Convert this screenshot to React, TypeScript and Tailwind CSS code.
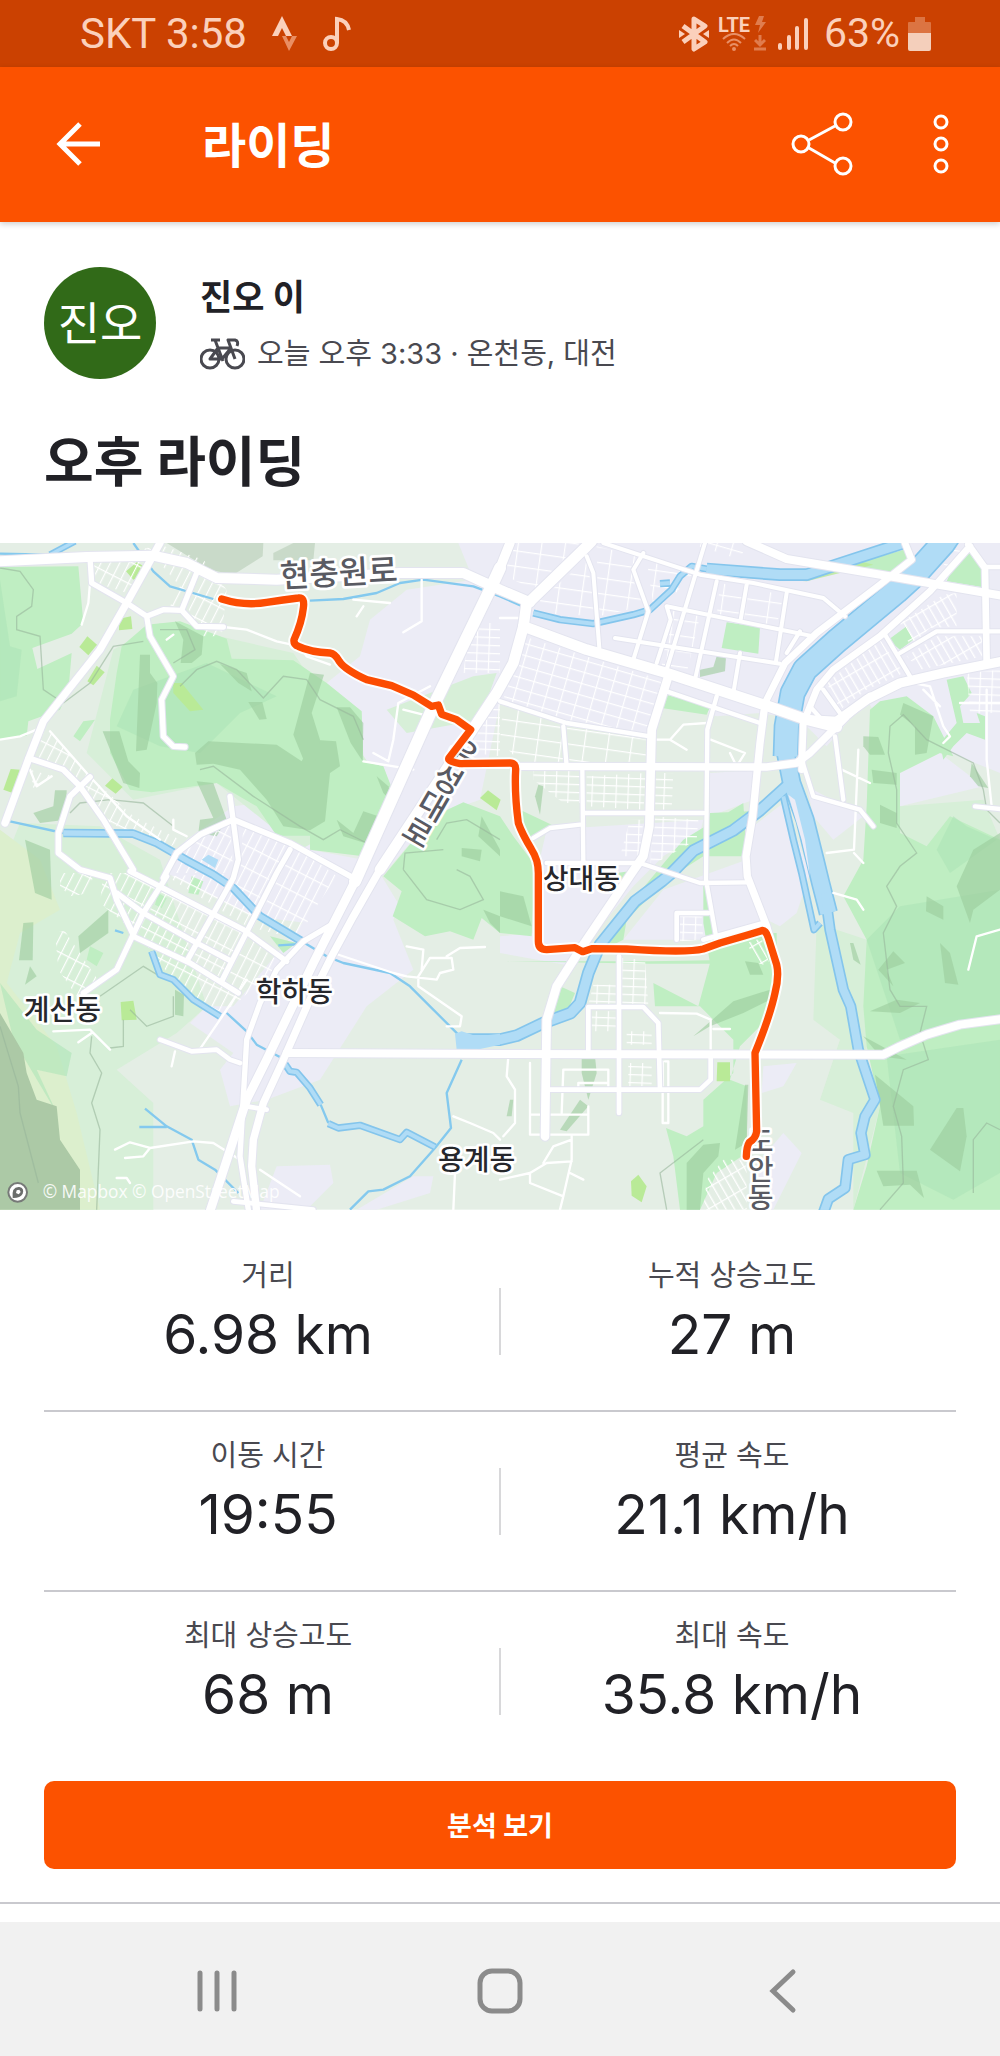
const stats = [
  [
    { label: '거리', value: '6.98 km' },
    { label: '누적 상승고도', value: '27 m' },
  ],
  [
    { label: '이동 시간', value: '19:55' },
    { label: '평균 속도', value: '21.1 km/h' },
  ],
  [
    { label: '최대 상승고도', value: '68 m' },
    { label: '최대 속도', value: '35.8 km/h' },
  ],
]

const route =
  'M665,178 Q735,200 800,188 Q850,180 895,175 Q915,172 910,205 Q905,250 882,300 Q880,315 895,320 Q930,337 990,340 Q1005,342 1018,365 Q1035,390 1100,420 L1175,438 1240,466 1295,500 1315,496 1325,524 1370,540 1412,570 1347,655 Q1342,665 1380,672 L1530,670 Q1548,670 1547,690 Q1543,760 1555,850 Q1565,880 1595,930 Q1615,960 1615,1000 L1615,1205 Q1615,1230 1640,1230 L1725,1224 1748,1236 1775,1227 1880,1228 Q2060,1240 2110,1228 L2160,1210 2240,1187 2285,1173 Q2297,1170 2305,1195 L2330,1275 Q2338,1310 2325,1360 Q2310,1430 2265,1540 L2270,1775 Q2268,1795 2248,1808 Q2240,1820 2239,1850'

const mainRoads = [
  { width: 30, d: 'M0,65 L260,52 460,48 560,70 650,115 830,120 1200,100 1390,100 1500,150 1590,188' },
  { width: 32, d: 'M1580,195 L1760,20 1775,5 M1580,190 L1570,262 1540,370 1490,460 1140,990' },
  { width: 22, d: 'M1140,990 L1060,1130 995,1250 925,1390 850,1560 790,1690 760,1800 755,1880 770,2015' },
  { width: 36, d: 'M1500,85 L1470,150 1300,500 1065,1025' },
  { width: 26, d: 'M1065,1025 L940,1270 800,1560 740,1680 630,2015' },
  { width: 32, d: 'M1570,260 L1760,330 2000,400 2300,498 2420,540 2510,562' },
  { width: 28, d: 'M2420,540 L2510,545 2600,480 2700,430 2830,400 3005,365 M1500,85 L1530,10' },
  { width: 24, d: 'M2240,5 L2360,58 2700,115 3005,168 M860,1540 L1500,1543 2650,1545 2700,1520 2780,1485 2880,1455 3005,1438' },
  { width: 26, d: 'M2005,410 L1955,570 1948,860 1930,950 1895,1000 1750,1215 1670,1340 1640,1440 1635,1790' },
  { width: 22, d: 'M1550,680 L2300,682 2390,670 2430,640 2540,530 2610,470 M2292,515 L2280,610 2258,830 2238,950 2242,1010 2300,1160 2335,1290' },
  { width: 20, d: 'M2295,490 L2355,370 2450,280 2640,135 2735,60 2715,10 M2405,690 L2410,550 2450,450 2500,390 2640,290 2790,155 2910,20 M2905,15 L2955,85 2960,365' },
  { width: 22, d: 'M480,10 L380,190 300,330 130,545 85,660 15,850' },
  { width: 16, d: 'M270,55 L275,130 380,190 440,230 490,210 545,212 590,260 670,262 M440,230 L450,290 520,410 485,480 490,590 520,620 555,622 M590,100 L545,212' },
  { width: 17, d: 'M85,655 L190,690 240,740 310,840 400,990 M270,712 L210,770 175,880 175,940 240,990 330,1015 350,1080 400,1185 M490,1015 L530,940 600,885 700,840 870,910 1070,1020' },
  { width: 16, d: 'M690,770 L715,960 700,1015 560,1265 M390,995 L440,1020 730,1170 860,1265 M350,1060 L430,1120 590,1210 695,1265 M400,1190 L570,1270 715,1360 M500,1010 L430,1120 350,1290 250,1360 M830,1000 L665,1325 M870,930 L830,1000 M995,1155 L910,1205 830,1290 780,1390 740,1500 730,1670 720,1850 745,2010' },
  { width: 14, d: 'M720,1570 L690,1560 650,1530 575,1535 480,1500 M740,1700 L800,1710 M700,1985 L940,2010' },
  { width: 12, d: 'M1810,10 L2100,105 2260,130 2470,175 2535,230 M1930,40 L1900,90 1945,215 1900,360 M1760,50 L1780,100 1798,325 M2115,10 L2000,390 M2150,125 L2085,420 M2360,160 L2328,365 M2240,135 L2222,240 M2000,200 L2430,288 M1845,295 L2340,372 M2000,200 L2012,240 1970,370 M2220,340 L2200,460 M2400,275 L2360,340' },
  { width: 13, d: 'M2000,455 L2280,550 M2150,470 L2122,570 2118,1020 2150,1200 M1500,485 L1700,550 1950,590 M1690,560 L1700,680 M1747,690 L1750,970 M1755,820 L2110,820 M1640,970 L1920,970 2100,1030 2240,1028 M1600,895 L1650,865 1740,855 M2402,650 L2440,770 2580,810 2620,860 M2505,590 L2530,780 M2655,285 L2730,410 M2700,340 L2810,275 3000,275 M2960,82 L3000,82 M2925,800 L3000,808 M2430,500 L2470,545 M2470,450 L2520,520' },
  { width: 14, d: 'M1857,1250 L1857,1720 M1765,1540 L1765,1402 1930,1402 1975,1450 1980,1650 M1640,1650 L2100,1650 2132,1620 2132,1545 M2030,1200 L2030,1120 2125,1120 M2110,1200 L2290,1150' },
]

const smallRoads =
  'M270,130 L265,190 245,255 M0,600 L60,590 110,570 M670,262 L740,270 830,305 900,320 920,350 990,375 M1500,235 L1560,235 M1265,120 L1265,245 1210,278 M1090,200 L1070,230 M1060,180 L1170,190 M1290,440 L1195,490 1180,600 1165,665 1120,640 M1090,665 L1240,690 M1210,510 L1290,530 M500,300 L520,285 M150,575 L260,700 380,830 480,900 M90,690 L110,740 155,710 M520,840 L520,870 560,890 M1060,1020 L960,950 M2132,1545 L2132,1440 2090,1422 1980,1420 M2140,1468 L2190,1468 M2132,600 L2235,640 2210,680 2190,640 M2060,630 L2010,600 2050,555 2120,550 M1960,600 L2010,600 M2525,690 L2610,730 M2575,630 L2562,930 2480,940 M2562,940 L2590,970 M2500,1060 L2570,1080 2590,1110 M3000,1170 L2930,1190 2905,1290 M1525,1550 L1520,1610 1545,1650 1545,1750 1510,1790 M1590,1570 L1590,1785 1765,1785 1765,1700 M1590,1725 L1765,1725 M1685,1720 L1690,1590 1825,1590 1825,1640 M1735,1650 L1735,1630 1825,1630 M1715,1790 L1715,1860 1690,1970 1680,2010 M1715,1865 L1640,1870 1590,1900 1500,1920 M1590,1900 L1590,1930 1690,1970 M1715,1800 L1660,1820 1630,1870 M1710,1900 L1750,1920 M1995,1565 L2005,1565 2005,1750 1988,1750 1988,1565 M1360,1730 L1410,1750 1480,1780 1500,1800 M1365,1900 L1360,2010 M345,1830 L390,1808 450,1825 580,1805 640,1810 720,1860 M375,1855 L430,1850 450,1825 M1000,1240 L1180,1300 1220,1310 1310,1320 1320,1300 1360,1290 1355,1255 1290,1255 1255,1310 1255,1340 1385,1430 1380,1460 1340,1460 M1220,1220 L1270,1230 1265,1290 M1340,1250 L1380,1225 1455,1222 M160,1475 L270,1470 330,1530 M275,1480 L235,1508 M525,1535 L515,1580 M595,1535 L660,1440 740,1320 M780,1890 L900,1970 M350,1915 L380,1915 390,1930 M2880,490 L3000,490 M2960,450 L2960,660 2975,800 M2740,430 L2790,440 2830,560 2850,590 2830,610 M2770,450 L2820,500'

const shades = [
  'M420,345 L450,345 450,400 472,430 470,490 440,630 408,635 Z',
  'M308,575 L358,575 385,665 420,700 418,745 370,730 Z',
  'M585,640 L625,605 830,615 905,665 940,600 1008,605 1020,680 990,700 975,845 930,872 850,860 800,780 720,690 640,672 590,675 Z',
  'M930,400 L972,405 935,520 960,600 935,720 880,585 Z',
  'M660,373 L740,400 755,455 715,430 Z',
  'M1010,503 L1050,503 1090,550 1088,665 1052,610 Z',
  'M1010,840 L1060,880 1090,815 1135,830 1095,910 1030,890 Z',
  'M525,245 L610,290 605,345 575,370 542,370 550,300 Z',
  'M745,487 L787,487 800,538 778,540 Z',
  'M165,752 L200,752 197,840 120,850 100,820 160,800 Z',
  'M590,725 L640,730 680,840 650,890 595,880 600,840 640,835 Z',
  'M75,900 L150,930 155,1080 105,1060 Z',
  'M70,1150 L100,1148 98,1262 57,1262 Z',
  'M235,1190 L325,1110 325,1180 240,1240 Z',
  'M90,1280 L110,1310 75,1335 Z',
  'M525,1350 L552,1365 550,1430 525,1425 Z',
  'M1130,710 L1165,740 1180,790 1150,760 Z',
  'M1385,925 L1445,930 1440,965 1385,950 Z',
  'M1445,830 L1500,930 1500,950 1435,890 Z',
  'M1500,1055 L1570,1070 1595,1160 1500,1130 Z',
  'M1450,1110 L1500,1130 1500,1180 1470,1150 Z',
  'M2590,590 L2635,592 2655,645 2610,645 2590,620 Z',
  'M2615,690 L2690,700 2690,735 2620,730 Z',
  'M2640,795 L2690,820 2690,865 2640,850 Z',
  'M2710,490 L2800,530 2780,640 2745,645 2745,560 2700,525 Z',
  'M2915,670 L2965,745 2935,740 2910,710 Z',
  'M2870,1040 L2920,930 3000,880 3000,1050 2920,1110 2910,1150 Z',
  'M2780,1070 L2830,1100 2830,1140 2778,1115 Z',
  'M2550,1210 L2560,1210 2582,1275 2560,1260 Z',
  'M2680,1235 L2715,1270 2660,1290 2680,1340 2635,1290 Z',
  'M2820,1210 L2850,1240 2875,1335 2835,1330 Z',
  'M2610,1415 L2690,1380 2760,1390 2700,1420 Z',
  'M2590,1490 L2720,1560 2640,1550 Z',
  'M2625,1605 L2740,1700 2742,1758 2650,1758 Z',
  'M2790,1830 L2870,1705 2890,1705 2900,1790 2880,1895 Z',
  'M2630,1893 L2750,1893 2772,1975 2730,1935 2650,1940 Z',
  'M2080,1490 L2200,1385 2310,1350 2310,1380 2230,1420 2130,1460 Z',
  'M2235,1265 L2275,1270 2290,1305 2250,1305 Z',
  'M2235,1635 L2245,1635 2240,1810 2205,1830 Z',
  'M2060,1870 L2110,1815 2160,1810 2155,1850 2110,1900 2100,2010 2060,2010 Z',
  'M1745,1540 L1785,1550 1790,1600 1765,1680 1745,1600 Z',
  'M1740,1680 L1765,1700 1700,1775 1680,1770 Z',
  'M1530,1680 L1540,1680 1535,1730 1520,1730 Z',
  'M2150,350 L2178,352 2175,395 2100,412 2100,390 2140,382 Z',
  'M1615,735 L1630,740 1620,825 1605,770 Z',
]

const parks = [
  'M358,237 L393,230 397,268 357,272 Z',
  'M238,322 L262,290 291,315 265,347 Z',
  'M262,425 L290,378 314,398 280,437 Z',
  'M315,738 L337,716 368,742 347,762 Z',
  'M10,750 L32,688 60,690 38,760 Z',
  'M378,95 L410,68 432,80 425,110 400,120 Z',
  'M1440,775 L1464,752 1502,780 1490,812 Z',
  'M362,1387 L400,1383 410,1440 365,1442 Z',
  'M2152,1568 L2190,1568 2190,1625 2150,1625 Z',
  'M1893,1925 L1915,1905 1940,1940 1925,1988 1895,1968 Z',
  'M520,430 L545,430 610,510 570,515 520,460 Z',
]

const streetBlocks = [
  { fill: 'url(#grid-city)', d: 'M1570,290 L1995,425 1945,590 1700,545 1510,480 Z' },
  { fill: 'url(#grid-wide)', d: 'M1510,10 L1740,10 1600,150 1500,100 Z M1620,180 L1760,60 1790,230 1620,220 Z M1790,20 L1910,50 1900,120 1930,200 1795,230 Z M1940,60 L2080,100 2010,180 1960,200 Z' },
  { fill: 'url(#grid-wide)', d: 'M2010,210 L2100,230 2060,400 1985,380 Z M2160,130 L2350,165 2330,260 2150,230 Z M2770,20 L2890,20 2850,90 Z' },
  { fill: 'url(#grid-wide)', d: 'M1510,490 L1690,550 1700,680 1560,670 1500,600 Z M1700,550 L1940,600 1940,670 1700,670 Z' },
  { fill: 'url(#grid-city)', d: 'M2060,10 L2240,10 2220,60 2130,30 Z' },
  { fill: 'url(#grid-tilt)', d: 'M2480,430 L2640,300 2710,400 2600,450 2520,510 Z M2700,250 L2830,165 2870,160 2870,260 2790,265 2730,320 Z M2720,350 L2810,290 2950,290 2950,350 2760,390 Z' },
  { fill: 'url(#grid-town)', d: 'M280,65 L480,15 610,60 680,150 665,290 610,290 560,200 510,200 540,140 470,60 380,160 290,130 Z' },
  { fill: 'url(#grid-town)', d: 'M100,580 L150,578 270,710 400,830 540,900 500,930 330,850 250,735 110,650 Z M90,690 L160,710 100,745 Z' },
  { fill: 'url(#grid-town)', d: 'M600,890 L690,850 700,1000 560,1000 500,1000 540,930 Z M730,860 L930,950 1010,1010 930,1130 900,1200 740,1160 500,1010 720,1000 Z' },
  { fill: 'url(#grid-town)', d: 'M400,1000 L720,1170 840,1270 700,1400 640,1420 540,1350 420,1190 300,1090 310,1000 Z M180,1000 L280,1000 270,1060 210,1070 180,1040 Z' },
  { fill: 'url(#grid-town)', d: 'M165,1175 L195,1175 300,1330 230,1370 175,1290 Z' },
  { fill: 'url(#grid-straight)', d: 'M1600,690 L1740,690 1740,790 1690,790 1600,720 Z M1760,710 L1940,700 1930,810 1760,800 Z M1965,700 L2020,700 2015,810 1965,810 Z M1890,840 L1930,840 1920,950 1860,950 Z M1960,830 L2095,840 2090,900 1950,980 Z' },
  { fill: 'url(#grid-straight)', d: 'M1865,1255 L1935,1260 1945,1395 1865,1395 Z M1780,1335 L1850,1335 1850,1395 1765,1395 Z M1775,1415 L1850,1415 1850,1475 1775,1475 Z M1880,1475 L1955,1475 1955,1515 1880,1515 Z M1885,1570 L1955,1570 1955,1640 1885,1640 Z M2040,1130 L2105,1130 2110,1200 2040,1205 Z' },
  { fill: 'url(#grid-tilt)', d: 'M2120,1920 L2170,1860 2235,1860 2240,1900 2150,2010 2110,2010 Z M2240,1210 L2285,1195 2310,1280 2270,1270 Z M2170,1960 L2240,1900 2240,2010 2140,2010 Z' },
  { fill: 'url(#grid-straight)', d: 'M2900,400 L3000,390 3000,520 2910,520 Z M1410,250 L1500,250 1500,400 1390,400 Z M1430,520 L1500,480 1500,650 1420,640 Z' },
]

const rivers = [
  { width: 70, d: 'M2850,-20 L2830,10 2745,105 2690,155 2515,300 2415,390 2378,460 2360,560 2357,650' },
  { width: 50, d: 'M2362,560 L2357,640 2375,730 2415,840 2445,960 2462,1030 2485,1120' },
  { width: 26, d: 'M2475,1060 L2490,1170 2530,1350 2552,1400 2575,1530 2625,1680 2595,1730 2583,1780 2595,1845 2545,1860 2535,1945 2485,1978 2470,2020' },
  { width: 30, d: 'M2360,740 L2280,812 2200,872 2080,933 2015,1000 1985,1025 1905,1085 1800,1215 1765,1300 1740,1390 1712,1420 1630,1450 1550,1488 1500,1500 1385,1500' },
  { width: 14, d: 'M2350,770 L2380,900 2405,1000 2442,1170 2460,1150' },
  { width: 30, d: 'M2710,10 L2510,75 2420,105 2340,105 2120,88' },
  { width: 14, d: 'M2120,88 L2075,80 2040,110 2015,150 1950,210 1900,225 1780,252 1680,240 1600,220 M2010,130 L1980,132' },
  { width: 12, d: 'M150,45 L225,5' },
  { width: 18, d: 'M190,880 L400,882 470,910 560,962 640,1005 700,1045 780,1130 830,1160 905,1205' },
  { width: 14, d: 'M455,1235 L480,1305 520,1320 580,1380 660,1430 M855,1573 L870,1595 890,1598 930,1645 962,1695 M985,1752 L1015,1765 1080,1757 1200,1800 1220,1778 1305,1822' },
]

const streams =
  'M0,42 L150,45 M400,10 L460,95 510,140 640,178 M930,183 L1030,178 1130,160 1200,130 1270,120 1420,140 1500,170 1590,210 M30,845 L190,880 M905,1205 L980,1250 1030,1270 1170,1300 1230,1340 1375,1485 M680,1420 L740,1475 770,1515 855,1560 M962,1695 L985,1750 M1385,1560 L1340,1660 1353,1765 1305,1825 1230,1910 1150,1950 1105,1955 1050,2010 M435,1707 L500,1760 575,1800 595,1860 645,1890 715,1960 M418,1762 L500,1762 M835,1217 L905,1213 M345,1172 L370,1180'

const contours =
  'M0,85 L60,95 100,150 95,200 50,230 50,270 120,290 130,450 190,490 M190,490 L270,430 340,320 430,305 M540,440 L590,390 650,365 710,390 790,475 850,410 920,420 960,480 1060,530 1090,600 M600,690 L640,680 760,770 900,860 970,900 1020,870 1100,910 M480,270 L560,270 585,330 520,370 M210,820 L240,790 330,780 430,790 520,860 M0,1460 L55,1640 60,1720 115,1930 M275,1490 L270,1540 305,1600 275,1690 300,1770 290,2010 M300,1370 L430,1280 480,1310 M370,1440 L370,1520 330,1525 M390,1410 L440,1460 520,1430 520,1370 M1210,990 L1280,1080 1380,1110 1450,1080 1410,1010 1370,990 M1310,900 L1340,850 1400,840 1500,900 M1210,990 L1215,940 1330,930 M2665,640 L2670,560 2710,525 2780,600 2920,670 2950,750 2960,810 3000,850 M2665,640 L2690,750 2690,850 2750,940 2700,980 2660,1040 2690,1100 2650,1180 2670,1350 2700,1400 2780,1400 2760,1480 2785,1560 2710,1590 2680,1700 2705,1790 2710,1930 2640,2010 M2920,1960 L2920,1800 2960,1750 3000,1770 M2000,2010 L1980,1900 2110,1800'

function Label({ x, y, children }: { x: number; y: number; children: string }) {
  return (
    <text
      x={x}
      y={y}
      fontSize={84}
      fontWeight={500}
      textAnchor="middle"
      fill="#26272c"
      stroke="#fff"
      strokeWidth={16}
      strokeLinejoin="round"
      paintOrder="stroke"
    >
      {children}
    </text>
  )
}

function RouteMap() {
  return (
    <svg viewBox="0 10 3000 2000" className="block w-full" role="img" aria-label="라이딩 경로 지도">
      <defs>
        <pattern id="grid-city" width="46" height="34" patternUnits="userSpaceOnUse" patternTransform="rotate(16)">
          <path d="M0,0 H46 M0,0 V34" stroke="#fff" strokeWidth="7" />
        </pattern>
        <pattern id="grid-wide" width="70" height="46" patternUnits="userSpaceOnUse" patternTransform="rotate(8)">
          <path d="M0,0 H70 M0,0 V46" stroke="#fff" strokeWidth="7" />
        </pattern>
        <pattern id="grid-tilt" width="22" height="56" patternUnits="userSpaceOnUse" patternTransform="rotate(-30)">
          <path d="M0,0 H22 M0,0 V56" stroke="#fff" strokeWidth="8" />
        </pattern>
        <pattern id="grid-town" width="25" height="60" patternUnits="userSpaceOnUse" patternTransform="rotate(27)">
          <path d="M0,0 H25 M0,0 V60" stroke="#fff" strokeWidth="7" />
        </pattern>
        <pattern id="grid-straight" width="36" height="24" patternUnits="userSpaceOnUse" patternTransform="rotate(2)">
          <path d="M0,0 H36 M0,0 V24" stroke="#fff" strokeWidth="7" />
        </pattern>
      </defs>

      {/* Land */}
      <rect y="10" width="3000" height="2000" fill="#e4eee5" />
      <g fill="#ececf6">
        <path d="M1375,10 L3000,10 3000,700 2650,560 2600,480 2480,620 2400,540 2280,520 2150,530 2000,470 1950,590 1700,560 1500,490 1440,780 1300,830 1145,1010 1200,1100 1180,1140 1240,1290 1100,1400 960,1620 800,1680 690,1700 660,1590 700,1540 570,1450 620,1400 700,1400 940,1110 1100,990 1190,790 1150,680 1090,665 1085,515 980,430 1080,350 1110,240 1220,150 1420,120 Z" />
        <path d="M560,900 L700,800 780,790 830,870 930,890 930,930 1090,960 1000,1160 760,1130 500,1000 Z" />
        <path d="M1640,870 L2110,840 2100,880 1990,950 1900,1040 1770,1200 1720,1280 1500,1240 1500,1190 1610,1180 1610,1000 Z M2130,700 L2280,690 2260,780 2130,830 Z M2420,740 L2590,830 2500,900 2440,830 Z M2260,860 L2350,790 2430,1000 2390,1120 2340,1160 2300,1140 2100,1200 1870,1200 1990,1050 2240,960 Z" />
        <path d="M2700,700 L2820,640 2950,740 2700,800 Z M830,1880 L990,1875 1000,1930 920,2010 780,2010 Z M1240,1910 L1300,1910 1290,1960 1130,2010 1070,2010 Z M2290,1850 L2350,1780 2405,1840 2320,2010 2250,2010 Z M2290,1580 L2390,1570 2350,1640 2285,1660 Z" />
      </g>
      <g fill="#d7efd8">
        <path d="M0,1000 L60,850 300,860 480,960 620,1400 530,1480 350,1590 460,1690 460,2010 0,2010 Z" />
        <path d="M340,330 L480,250 880,340 1180,780 900,930 650,730 400,780 260,640 Z" />
        <path d="M2450,1150 L2600,1200 2600,1600 2640,1700 2560,2010 2560,1720 2460,1680 2520,1500 2440,1440 Z" />
        <path d="M1160,510 L1420,410 1490,400 1440,540 1220,580 Z" />
        <path d="M2640,1000 L2600,860 2700,800 2950,780 3000,900 3000,1050 Z" />
      </g>
      <path
        d="M0,870 L120,960 180,1110 60,1180 20,1330 170,1520 230,1720 300,2010 0,2010 Z"
        fill="#dcefcd"
      />
      <g fill="#bfeec2">
        <path d="M0,82 L235,80 250,250 215,282 97,325 112,388 215,340 205,455 180,510 85,545 80,588 0,602 Z" />
        <path d="M440,255 L540,245 680,297 695,357 880,362 980,430 1085,515 1090,665 1150,680 1185,770 1090,950 930,930 930,888 830,888 770,800 650,730 455,758 390,750 330,640 330,540 350,400 365,320 Z" />
        <path d="M1150,1010 L1300,830 1390,788 1500,830 1540,890 1600,970 1600,1080 1595,1190 1500,1180 1445,1135 1420,1200 1350,1175 1275,1190 1178,1130 1205,1055 Z" />
        <path d="M1560,810 L1655,855 1600,895 1570,880 Z" />
        <path d="M2610,510 L2640,485 2720,470 2800,530 2860,650 2820,640 2700,700 2700,880 2780,920 2850,830 3000,900 3000,2010 2560,2010 2600,1880 2640,1700 2600,1520 2590,1400 2600,1200 2530,1070 2590,960 2600,800 Z" />
        <path d="M2840,420 L2890,410 2915,460 2880,500 2890,550 2940,550 2930,520 2955,530 2955,600 2900,580 2860,620 2830,660 2820,610 2870,550 Z" />
        <path d="M2110,1010 L2140,1180 2330,1180 2330,1360 2300,1440 2220,1520 2190,1620 2240,1640 2240,1840 2150,1900 2100,2010 2040,2010 2020,1850 1998,1765 2060,1790 2110,1760 2110,1680 2200,1600 2200,1500 2150,1450 2100,1400 1965,1400 1960,1330 2095,1400 2130,1270 2110,1150 Z" />
        <path d="M2050,900 L2230,790 2240,950 2110,950 2000,1020 1880,1140 1870,1200 1790,1240 1900,1080 Z M2130,820 L2250,815 2200,880 2120,890 Z M1680,1340 L1725,1360 1700,1420 1650,1430 Z M1850,1000 L1920,990 1870,1050 Z" />
        <path d="M2180,248 L2280,262 2275,342 2165,325 Z M2000,465 L2130,503 2120,525 1985,505 Z M2550,75 L2730,25 2735,60 2700,105 Z M2860,80 L2905,25 2950,80 2945,142 2840,125 Z M2665,300 L2720,260 2740,300 2700,330 Z M1520,1265 L1640,1265 1950,1265 2130,1262 2130,1272 1950,1272 Z" />
        <path d="M575,1010 L610,1025 595,1065 565,1060 Z M475,1060 L500,1075 485,1105 465,1095 Z M810,1190 L890,1210 850,1240 Z M250,545 L285,540 240,605 220,590 Z M270,1220 L310,1240 290,1280 260,1260 Z" />
      </g>
      <g fill="#aee5b8" opacity="0.6">
        <path d="M0,120 L30,320 65,330 50,470 0,485 Z M400,450 L620,370 830,470 720,520 600,640 480,620 350,560 Z M0,1330 L110,1470 215,1540 200,1610 110,1590 170,1720 40,1500 Z" />
        <path d="M2700,1100 L3000,1050 3000,1440 2700,1500 2600,1200 Z M2660,1550 L3000,1500 3000,1900 2860,1980 2700,1900 Z" />
        <path d="M2860,830 L2900,860 2990,900 2850,1000 2810,930 Z" />
      </g>
      <path d="M0,1420 L70,1540 80,1600 110,1680 170,1700 180,1800 240,1890 240,2010 0,2010 Z" fill="#acc9a6" />
      <path d="M500,10 L790,10 788,50 700,105 630,90 Z M820,40 L880,10 945,10 940,62 820,62 Z" fill="#c9dac9" />
      <g fill="#9ccc9d" opacity="0.6">
        {shades.map((d) => (
          <path key={d} d={d} />
        ))}
      </g>
      <g fill="#b9ea97">
        {parks.map((d) => (
          <path key={d} d={d} />
        ))}
        <path d="M2240,115 L2420,125 2620,75 2560,60 2400,95 Z M2470,390 L2520,335 2700,190 2800,70 2770,70 2500,330 Z" opacity="0.8" />
      </g>
      <path d={contours} fill="none" stroke="#98b69b" strokeWidth="4" opacity="0.6" />

      {streetBlocks.map(({ fill, d }) => (
        <path key={d} d={d} fill={fill} />
      ))}

      {/* Water */}
      <g fill="none" strokeLinejoin="round">
        <path d={streams} stroke="#84c9ee" strokeWidth="7" />
        {rivers.map(({ width, d }) => (
          <path key={d} d={d} stroke="#84c5ec" strokeWidth={width + 8} />
        ))}
        {rivers.map(({ width, d }) => (
          <path key={d} d={d} stroke="#b0dcf6" strokeWidth={width - 2} />
        ))}
      </g>
      <path d="M1365,1482 L1385,1475 1430,1490 1500,1482 1500,1515 1430,1530 1370,1530 Z M605,960 L625,945 655,960 645,985 Z" fill="#b0dcf6" />
      <path d="M2365,765 L2385,780 2415,900 2430,1010 2405,900 Z" fill="#ececf6" />

      {/* Roads */}
      <g fill="none" strokeLinejoin="round" strokeLinecap="round">
        <path d={smallRoads} stroke="#fff" strokeWidth="7" />
        {mainRoads.map(({ width, d }) => (
          <path key={d} d={d} stroke="#e3e4ef" strokeWidth={width + 6} />
        ))}
        {mainRoads.map(({ width, d }) => (
          <path key={d} d={d} stroke="#fff" strokeWidth={width} />
        ))}
      </g>

      {/* Road names */}
      <g
        fontSize={84}
        fontWeight={500}
        fill="#595a62"
        stroke="#fff"
        strokeWidth={16}
        strokeLinejoin="round"
        paintOrder="stroke"
      >
        <text transform="translate(1018 134) rotate(-3)" fontSize={96} textAnchor="middle">
          현충원로
        </text>
        <text transform="translate(1340 715) rotate(30)" y="-138" fontSize={92} writingMode="vertical-rl">
          유성대로
        </text>
        <text x="2276" y="1763" writingMode="vertical-rl">
          도안동
        </text>
      </g>

      <Label x={1744} y={1047}>상대동</Label>
      <Label x={187} y={1440}>계산동</Label>
      <Label x={883} y={1387}>학하동</Label>
      <Label x={1430} y={1891}>용계동</Label>

      {/* Route */}
      <g fill="none" strokeLinecap="round" strokeLinejoin="round">
        <path d={route} stroke="#fff" strokeWidth="34" opacity="0.9" />
        <path d={route} stroke="#fc4c02" strokeWidth="22" />
      </g>

      {/* Attribution */}
      <circle cx="53" cy="1958" r="28" fill="#fff" stroke="#777a78" strokeWidth="6" />
      <path d="M38,1975 Q34,1940 58,1942 Q74,1945 68,1962 Q60,1976 38,1975 Z" fill="#6a6d6b" />
      <path d="M50,1952 L58,1950 62,1957 56,1964 48,1960 Z" fill="#fff" />
      <text x="128" y="1976" fontSize="52" className="font-['Open_Sans',sans-serif]" fill="#fff" opacity="0.9">
        © Mapbox © OpenStreetMap
      </text>
    </svg>
  )
}

function StatusBar() {
  return (
    <div className="flex h-[67px] items-center justify-between bg-[#cb4101] pr-[69px] pl-20 font-['Roboto',sans-serif] text-[#fbd0bb]">
      <div className="flex items-center">
        <span className="text-[42px] leading-none">SKT 3:58</span>
        <svg className="ml-6 h-9 w-7" viewBox="0 0 28 36" aria-hidden="true">
          <path d="M1,20 L11,0 21,20 15,20 11,12 7,20 Z" fill="currentColor" />
          <path d="M11,20 L15,20 18,26 21,20 26,20 18,35 Z" fill="#e98e63" />
        </svg>
        <svg className="ml-6 h-9 w-7" viewBox="0 0 28 36" fill="none" stroke="currentColor" strokeWidth="4" aria-hidden="true">
          <circle cx="8" cy="27" r="6" />
          <path d="M14,27 V3 Q24,4 26,14" />
        </svg>
      </div>
      <div className="flex items-center">
        <svg className="h-9 w-8" viewBox="0 0 32 36" aria-hidden="true">
          <path d="M5,10 L27,26 16,33 V3 L27,10 5,26" fill="none" stroke="currentColor" strokeWidth="5" strokeLinejoin="round" />
          <path d="M1,14 L7,18 1,22 Z M31,14 L25,18 31,22 Z" fill="currentColor" />
        </svg>
        <div className="ml-2 flex w-12 flex-col">
          <div className="flex h-[17px] items-center">
            <span className="w-9 text-[20px] leading-none font-bold">LTE</span>
            <svg className="h-[17px] w-3" viewBox="0 0 12 17" fill="#e07c4e" aria-hidden="true">
              <path d="M5,0 H10 L8,6 H12 L4,17 6,9 H1 Z" />
            </svg>
          </div>
          <div className="flex h-[18px] items-center">
            <svg className="ml-1 h-[18px] w-6" viewBox="0 0 24 18" fill="none" stroke="#e88f66" strokeWidth="2" aria-hidden="true">
              <path d="M1,6 Q12,-4 23,6 M5,10 Q12,3 19,10 M8,13 Q12,9 16,13" />
              <circle cx="12" cy="16" r="1" />
            </svg>
            <svg className="ml-2 h-[18px] w-3" viewBox="0 0 12 18" fill="none" stroke="#e07c4e" strokeWidth="3" aria-hidden="true">
              <path d="M6,2 V12 M1,7 L6,12 11,7 M0,16 H12" />
            </svg>
          </div>
        </div>
        <svg className="ml-3 h-8 w-[30px]" viewBox="0 0 30 32" stroke="currentColor" strokeWidth="4" strokeLinecap="round" aria-hidden="true">
          <path d="M2,27 V30 M11,19 V30 M19,10 V30 M28,2 V30" />
        </svg>
        <span className="ml-4 text-[41px] leading-none">63%</span>
        <svg className="ml-2 h-[34px] w-[23px]" viewBox="0 0 23 34" aria-hidden="true">
          <path d="M7,0 H17 V5 H22 Q23,5 23,6 V16 H0 V6 Q0,5 1,5 H7 Z" fill="#dc7442" />
          <path d="M0,16 H23 V32 Q23,34 21,34 H2 Q0,34 0,32 Z" fill="#f4cfbb" />
        </svg>
      </div>
    </div>
  )
}

function AppBar() {
  return (
    <header className="relative flex h-[155px] items-center bg-[#fc5200] pr-[51px] pb-0.5 pl-14 text-white shadow-[0_2px_6px_rgba(0,0,0,0.2)]">
      <button type="button" aria-label="뒤로">
        <svg className="h-11 w-11" viewBox="0 0 44 44" fill="none" stroke="currentColor" strokeWidth="5" aria-hidden="true">
          <path d="M44,22 H4 M24,2 L4,22 24,42" />
        </svg>
      </button>
      <h1 className="ml-[102px] flex-1 pt-1 text-[48px] leading-none font-bold">라이딩</h1>
      <button type="button" aria-label="공유">
        <svg className="h-16 w-[62px]" viewBox="0 0 62 64" fill="none" stroke="currentColor" strokeWidth="3" aria-hidden="true">
          <circle cx="10" cy="32" r="8" />
          <circle cx="52" cy="10" r="8" />
          <circle cx="52" cy="54" r="8" />
          <path d="M18,28 L44,14 M18,36 L44,51" />
        </svg>
      </button>
      <button type="button" aria-label="더보기" className="ml-20">
        <svg className="h-[60px] w-4" viewBox="0 0 16 60" fill="none" stroke="currentColor" strokeWidth="3" aria-hidden="true">
          <circle cx="8" cy="8" r="6" />
          <circle cx="8" cy="30" r="6" />
          <circle cx="8" cy="52" r="6" />
        </svg>
      </button>
    </header>
  )
}

function BikeIcon() {
  return (
    <svg className="h-8 w-[45px]" viewBox="0 0 45 32" fill="none" stroke="currentColor" strokeWidth="3" strokeLinejoin="round" aria-hidden="true">
      <circle cx="10" cy="21" r="9" />
      <circle cx="35" cy="21" r="9" />
      <path d="M10,21 L18,10 H31 L22,21 Z M23,23 L15,2 M11,2 H20 M35,21 L28,2 H35 Q39,3 37,8" />
    </svg>
  )
}

function ActivityHeader() {
  return (
    <section className="px-11 pt-[45px] pb-12">
      <div className="flex items-center">
        <div className="flex size-28 items-center justify-center rounded-full bg-[#316a18] text-[46px] leading-none text-white">
          진오
        </div>
        <div className="ml-11 pt-1">
          <p className="text-[35px] leading-[50px] font-bold">진오 이</p>
          <p className="mt-2 flex items-center gap-3 text-[29px] leading-[48px] text-[#494950]">
            <BikeIcon />
            오늘 오후 3:33 · 온천동, 대전
          </p>
        </div>
      </div>
      <h2 className="mt-13 text-[54px] leading-[64px] font-bold">오후 라이딩</h2>
    </section>
  )
}

function Stats() {
  return (
    <section className="px-11 pt-[22px]">
      {stats.map((row) => (
        <dl key={row[0].label} className="grid h-[180px] grid-cols-2 gap-4 border-[#c9c9ce] not-last:border-b-2">
          {row.map(({ label, value }) => (
            <div key={label} className="group relative pt-6 text-center">
              <dt className="text-[29px] leading-10 text-[#494950]">{label}</dt>
              <dd className="mt-2 text-[55px] leading-[60px]">{value}</dd>
              <span className="absolute top-14 -right-[9px] h-[67px] w-0.5 bg-[#d8d8da] group-last:hidden" />
            </div>
          ))}
        </dl>
      ))}
    </section>
  )
}

function NavBar() {
  return (
    <nav className="flex h-[134px] items-center justify-around bg-[#f1f1f1] px-[76px] pt-1 text-[#8b8b8b]">
      <button type="button" aria-label="최근 앱">
        <svg className="h-12 w-12" viewBox="0 0 48 48" stroke="currentColor" strokeWidth="5" strokeLinecap="round" aria-hidden="true">
          <path d="M7,6 V42 M24,6 V42 M41,6 V42" />
        </svg>
      </button>
      <button type="button" aria-label="홈">
        <svg className="h-12 w-12" viewBox="0 0 48 48" fill="none" stroke="currentColor" strokeWidth="5" aria-hidden="true">
          <rect x="4" y="4" width="40" height="40" rx="12" />
        </svg>
      </button>
      <button type="button" aria-label="뒤로 가기">
        <svg className="h-12 w-12" viewBox="0 0 48 48" fill="none" stroke="currentColor" strokeWidth="5" strokeLinecap="round" aria-hidden="true">
          <path d="M34,5 L14,24 34,43" />
        </svg>
      </button>
    </nav>
  )
}

export default function App() {
  return (
    <div className="flex min-h-screen flex-col bg-white font-['Inter','Noto_Sans_CJK_KR',sans-serif] text-[#212126]">
      <StatusBar />
      <AppBar />
      <main className="flex-1">
        <ActivityHeader />
        <RouteMap />
        <Stats />
        <div className="border-b-2 border-[#c9c9ce] px-11 pt-[9px] pb-[33px]">
          <button type="button" className="h-[88px] w-full rounded-[10px] bg-[#fc5200] pt-1.5 text-[27px] font-bold text-white">
            분석 보기
          </button>
        </div>
      </main>
      <NavBar />
    </div>
  )
}
